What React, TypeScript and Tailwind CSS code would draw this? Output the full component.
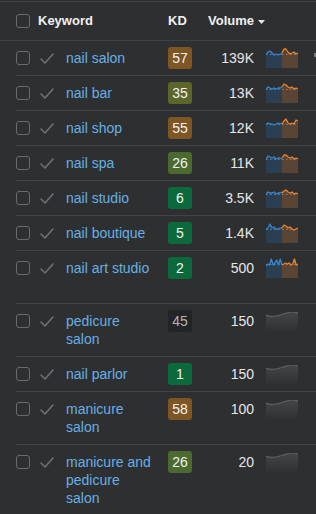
import React from "react";

type Row = {
  kw: string;
  kd: number;
  kdBg: string;
  kdText?: string;
  vol: string;
  blue?: number[];
  orange?: number[];
  gray?: boolean;
  tall?: boolean;
  mark?: boolean;
};

const BROWN = "bg-[#7e5624]";
const OLIVE = "bg-[#5c652a]";
const GREEN26 = "bg-[#4a6a30]";
const GREEN = "bg-[#0b6a3c]";
const DARK = "bg-[#232426]";

const rows: Row[] = [
  { kw: "nail salon", kd: 57, kdBg: BROWN, vol: "139K", blue: [6, 4, 3, 5, 7, 6, 7, 6, 6], orange: [5, 1, 1, 4, 6, 5, 4, 6, 5], mark: true },
  { kw: "nail bar", kd: 35, kdBg: OLIVE, vol: "13K", blue: [6, 4, 5, 6, 5, 6, 5, 5, 4], orange: [4, 1, 2, 4, 5, 4, 6, 5, 6] },
  { kw: "nail shop", kd: 55, kdBg: BROWN, vol: "12K", blue: [7, 5, 6, 6, 7, 6, 5, 6, 5], orange: [6, 3, 1, 5, 6, 5, 6, 2, 3] },
  { kw: "nail spa", kd: 26, kdBg: GREEN26, vol: "11K", blue: [6, 3, 4, 5, 4, 6, 5, 5, 6], orange: [5, 2, 2, 4, 5, 4, 6, 5, 6] },
  { kw: "nail studio", kd: 6, kdBg: GREEN, vol: "3.5K", blue: [6, 4, 5, 5, 4, 6, 5, 5, 4], orange: [5, 3, 2, 4, 5, 4, 6, 5, 6] },
  { kw: "nail boutique", kd: 5, kdBg: GREEN, vol: "1.4K", blue: [6, 5, 1, 5, 4, 6, 6, 5, 5], orange: [5, 2, 3, 5, 4, 6, 7, 6, 5] },
  { kw: "nail art studio", kd: 2, kdBg: GREEN, vol: "500", blue: [8, 6, 7, 1, 7, 5, 2, 7, 1, 7], orange: [7, 6, 5, 6, 5, 7, 6, 1, 7, 6], tall: true },
  { kw: "pedicure salon", kd: 45, kdBg: DARK, kdText: "text-[#b4b4b4]", vol: "150", gray: true },
  { kw: "nail parlor", kd: 1, kdBg: GREEN, vol: "150", gray: true },
  { kw: "manicure salon", kd: 58, kdBg: BROWN, vol: "100", gray: true },
  { kw: "manicure and pedicure salon", kd: 26, kdBg: GREEN26, vol: "20", gray: true },
];

function linePath(ys: number[], x0: number, w: number) {
  const step = w / (ys.length - 1);
  return ys.map((y, i) => `${i === 0 ? "M" : "L"}${(x0 + i * step).toFixed(2)},${y}`).join(" ");
}
function areaPath(ys: number[], x0: number, w: number) {
  return `${linePath(ys, x0, w)} L${x0 + w},20 L${x0},20 Z`;
}

function ColorChart({ blue, orange }: { blue: number[]; orange: number[] }) {
  return (
    <svg width="32" height="20" viewBox="0 0 32 20" className="block">
      <path d={areaPath(blue, 0, 16)} fill="#2b3f53" />
      <path d={areaPath(orange, 16, 16)} fill="#5a4534" />
      <line x1="0" y1="6.5" x2="32" y2="6.5" stroke="#9a9a9a" strokeWidth="1" strokeDasharray="1.5 2.5" opacity="0.7" />
      <path d={linePath(blue, 0, 16)} fill="none" stroke="#2f88d6" strokeWidth="1.3" strokeLinejoin="round" />
      <path d={linePath(orange, 16, 16)} fill="none" stroke="#ea832f" strokeWidth="1.3" strokeLinejoin="round" />
    </svg>
  );
}

function GrayChart({ id }: { id: string }) {
  const d = "M0,3 C4,5 8,5 14,3 C20,1 23,0 26,0 C29,0 31,1 32,1";
  return (
    <svg width="32" height="20" viewBox="0 0 32 20" className="block">
      <defs>
        <linearGradient id={id} x1="0" y1="0" x2="0" y2="1">
          <stop offset="0" stopColor="#454648" />
          <stop offset="1" stopColor="#2e2f31" />
        </linearGradient>
      </defs>
      <path d={`${d} L32,20 L0,20 Z`} fill={`url(#${id})`} />
      <path d={d} fill="none" stroke="#5e5f62" strokeWidth="1.2" />
    </svg>
  );
}

function Checkbox() {
  return <div className="w-[14px] h-[14px] rounded-[3px] border border-[#6a6b6d] shrink-0" />;
}

function Check() {
  return (
    <svg width="14" height="12" viewBox="0 0 14 12" className="block">
      <polyline points="1,6 5,10 13,1" fill="none" stroke="#6f7072" strokeWidth="1.6" strokeLinecap="round" strokeLinejoin="round" />
    </svg>
  );
}

export default function App() {
  return (
    <div
      className="w-[316px] h-[514px] overflow-hidden bg-[#2e2f31] text-[14px] leading-[18px]"
      style={{ fontFamily: '"Liberation Sans", Arial, sans-serif' }}
    >
      <div className="mt-px h-[40px] border-t border-b border-[#404144] flex items-center pl-4">
        <Checkbox />
        <div className="ml-2 w-[130px] text-[13px] font-bold text-[#f0f0f0]">Keyword</div>
        <div className="w-[40px] text-[13px] font-bold text-[#f0f0f0]">KD</div>
        <div className="flex items-center text-[13px] font-bold text-[#f0f0f0]">
          Volume
          <svg width="7" height="4" viewBox="0 0 7 4" className="ml-[4px] mt-[2px]">
            <polygon points="0,0 7,0 3.5,4" fill="#e8e8e8" />
          </svg>
        </div>
      </div>
      {rows.map((r, idx) => (
        <div key={r.kw} className="ml-4 border-b border-[#434447] flex items-start py-2 overflow-hidden">
          <div className="mt-[2px]">
            <Checkbox />
          </div>
          <div className="ml-[10px] mt-[4px] w-[14px]">
            <Check />
          </div>
          <div className={`ml-[12px] w-[88px] text-[#67b0e5] ${r.tall ? "min-h-[36px]" : ""}`}>{r.kw}</div>
          <div
            className={`ml-[14px] -mt-[2px] -mb-[2px] w-[24px] h-[22px] rounded-[3px] flex items-center justify-center shrink-0 ${r.kdBg} ${r.kdText ?? "text-[#f2f2f2]"}`}
          >
            {r.kd}
          </div>
          <div className="w-[62px] text-right text-[#e6e6e6] shrink-0">{r.vol}</div>
          <div className={`ml-[12px] shrink-0 h-[18px] ${r.gray ? "mt-0" : "-mt-px"}`}>
            {r.gray ? <GrayChart id={`g${idx}`} /> : <ColorChart blue={r.blue!} orange={r.orange!} />}
          </div>
          {r.mark && <div className="ml-[16px] mt-[4px] w-[2px] h-[4px] bg-[#7a7a7a] shrink-0" />}
        </div>
      ))}
    </div>
  );
}
